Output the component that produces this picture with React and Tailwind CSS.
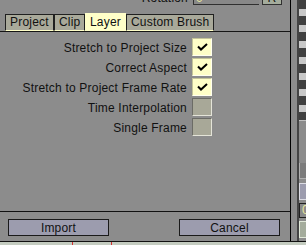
import React from "react";

const options = [
	{ label: "Stretch to Project Size", checked: true },
	{ label: "Correct Aspect", checked: true },
	{ label: "Stretch to Project Frame Rate", checked: true },
	{ label: "Time Interpolation", checked: false },
	{ label: "Single Frame", checked: false },
];

const tabs = [
	{ name: "Project", width: "w-[49px]" },
	{ name: "Clip", width: "w-[31px]" },
	{ name: "Layer", width: "w-[41px]", active: true },
	{ name: "Custom Brush", width: "w-[88px]" },
];

function Check() {
	return (
		<svg width="11" height="8" viewBox="0 0 11 8" fill="none">
			<path d="M1 3.5 L4 6.5 L10 1" stroke="#000" strokeWidth="2" />
		</svg>
	);
}

function Checkbox({ checked }) {
	if (checked) {
		return (
			<div className="w-[20px] h-[18px] flex items-center justify-center bg-[#ffffc8] border border-t-[#c4c49a] border-l-[#c4c49a] border-b-[#fffff0] border-r-[#fffff0]">
				<Check />
			</div>
		);
	}
	return (
		<div className="w-[20px] h-[18px] bg-[#a8a898] border border-t-[#6c6c66] border-l-[#6c6c66] border-b-[#e4e4d8] border-r-[#e4e4d8]" />
	);
}

export default function App() {
	return (
		<div className="w-[306px] h-[245px] overflow-hidden bg-[#8c8c8c] text-[12px] text-[#111] font-['Liberation_Sans',Arial,sans-serif] tracking-[0.2px] flex flex-col">
			<div className="flex h-[241px]">
				{/* main panel */}
				<div className="w-[291px] border-r border-black flex flex-col">
					{/* rotation row, mostly scrolled out of view */}
					<div className="h-[5px] flex overflow-hidden">
						<div className="w-[188px] h-[14px] -mt-[9px] leading-[14px] text-right shrink-0">
							Rotation
						</div>
						<div className="ml-[5px] w-[66px] h-[5px] bg-[#888888] border-l border-b border-[#303030] flex overflow-hidden shrink-0">
							<span className="ml-[2px] -mt-[9px] leading-[14px] text-[#e8e8a0]">0</span>
						</div>
						<div className="ml-[3px] w-[20px] h-[5px] bg-[#a4ac9c] border-l border-r border-b border-[#303030] flex justify-center overflow-hidden shrink-0">
							<span className="-mt-[9px] leading-[14px]">R</span>
						</div>
					</div>

					{/* tabs */}
					<div className="mt-[8px] h-[18px] pl-[5px] flex items-end">
						{tabs.map((tab) =>
							tab.active ? (
								<div
									key={tab.name}
									className={`${tab.width} h-[18px] bg-[#ffffc8] pl-[5px] pt-[2px] leading-[14px]`}
								>
									{tab.name}
								</div>
							) : (
								<div
									key={tab.name}
									className={`${tab.width} h-[17px] bg-[#a9a99a] border-t border-l border-r border-[#202020] border-b border-b-[#ffffc8] pl-[4px] pt-[1px] leading-[13px]`}
								>
									{tab.name}
								</div>
							)
						)}
					</div>
					<div className="h-[1px] bg-[#151515]" />

					{/* options */}
					<div className="mt-[6px] pr-[78px] flex flex-col items-end gap-[2px]">
						{options.map((opt) => (
							<div key={opt.label} className="flex items-center h-[18px]">
								<span className="mr-[5px] pt-[2px] leading-[14px]">{opt.label}</span>
								<Checkbox checked={opt.checked} />
							</div>
						))}
					</div>

					<div className="flex-1" />
					<div className="h-[1px] bg-[#111]" />

					{/* buttons */}
					<div className="pt-[7px] pl-[8px] pb-[5px] flex">
						<button className="w-[101px] h-[17px] bg-[#9c9cae] border border-[#1a1a1a] leading-[14px] text-center">
							Import
						</button>
						<button className="ml-[70px] w-[101px] h-[17px] bg-[#9c9cae] border border-[#1a1a1a] leading-[14px] text-center">
							Cancel
						</button>
					</div>
				</div>

				{/* right edge of neighbouring panel */}
				<div className="w-[6px]" />
				<div className="w-[2px] bg-[#444]" />
				<div className="w-[7px] flex flex-col">
					<div className="h-[120px] bg-[#404040] flex flex-col pt-[9px] gap-[9px]">
						{[0, 1, 2, 3, 4, 5, 6].map((i) => (
							<div key={i} className="h-[7px] bg-[#c8c8c8]" />
						))}
					</div>
					<div className="h-[1px] bg-[#c0c0c0]" />
					<div className="mt-[42px] h-[16px] bg-[#7c7c7c] border-l border-b border-[#b0b0b0]" />
					<div className="mt-[4px] h-[17px] bg-[#9c9cae] border-l border-t border-b border-[#dcdce4]" />
					<div className="mt-[3px] h-[15px] bg-[#8a8a8a] border-l border-t border-b border-[#202020] text-[#e8e8a0] leading-[13px] pl-[2px]">
						0
					</div>
					<div className="mt-[3px] h-[17px] bg-[#a4ac9c] border-l border-t border-b border-[#e0e8d8]" />
				</div>
			</div>
			<div className="h-[1px] bg-[#111]" />
			<div className="flex-1 bg-[#c4ccc0] flex">
				<div className="ml-[72px] w-[1px] bg-[#d03030]" />
				<div className="ml-[38px] w-[1px] bg-[#d03030]" />
			</div>
		</div>
	);
}
